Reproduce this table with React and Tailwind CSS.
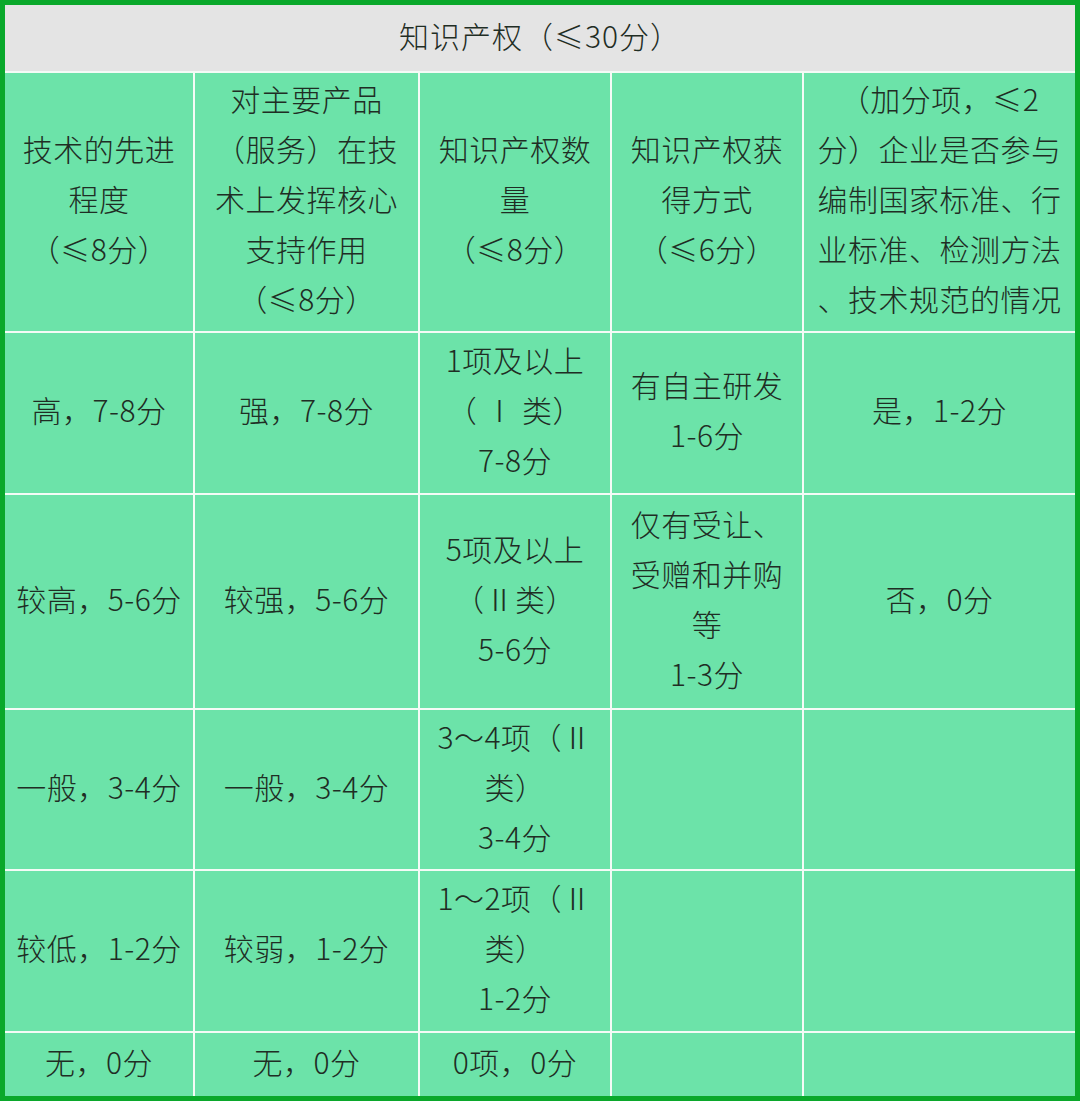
export default function App() {
  const font = { fontFamily: '"Noto Sans CJK SC", "Noto Sans", sans-serif' };
  const cell = "bg-[#6ce3a9] flex items-center justify-center text-center pb-2";

  const header = [
    ["技术的先进", "程度", "（≤8分）"],
    ["对主要产品", "（服务）在技", "术上发挥核心", "支持作用", "（≤8分）"],
    ["知识产权数", "量", "（≤8分）"],
    ["知识产权获", "得方式", "（≤6分）"],
    ["（加分项，≤2", "分）企业是否参与", "编制国家标准、行", "业标准、检测方法", "、技术规范的情况"],
  ];

  const rows = [
    [["高，7-8分"], ["强，7-8分"], ["1项及以上", "（ Ⅰ 类）", "7-8分"], ["有自主研发", "1-6分"], ["是，1-2分"]],
    [["较高，5-6分"], ["较强，5-6分"], ["5项及以上", "（Ⅱ类）", "5-6分"], ["仅有受让、", "受赠和并购", "等", "1-3分"], ["否，0分"]],
    [["一般，3-4分"], ["一般，3-4分"], ["3～4项（Ⅱ", "类）", "3-4分"], [], []],
    [["较低，1-2分"], ["较弱，1-2分"], ["1～2项（Ⅱ", "类）", "1-2分"], [], []],
    [["无，0分"], ["无，0分"], ["0项，0分"], [], []],
  ];

  const Lines = ({ lines }) => (
    <div>
      {lines.map((l, i) => (
        <div key={i}>{l}</div>
      ))}
    </div>
  );

  return (
    <div
      style={font}
      className="w-[1080px] h-[1101px] border-[5px] border-[#0aa82b] bg-[#0aa82b] text-[#1f2d24] text-[30px] font-light leading-[50px] tracking-[0.5px]"
    >
      <div className="grid h-full grid-cols-[188px_223px_190px_190px_1fr] grid-rows-[66px_258px_160px_213px_159px_160px_1fr] gap-[2px] bg-[#f4fbf6]">
        <div className="col-span-5 bg-[#e4e4e4] flex items-center justify-center pb-[6px] tracking-[1px]">知识产权（≤30分）</div>
        {header.map((h, i) => (
          <div key={i} className={cell}>
            <Lines lines={h} />
          </div>
        ))}
        {rows.map((r, ri) =>
          r.map((c, ci) => (
            <div key={`${ri}-${ci}`} className={cell}>
              <Lines lines={c} />
            </div>
          ))
        )}
      </div>
    </div>
  );
}
